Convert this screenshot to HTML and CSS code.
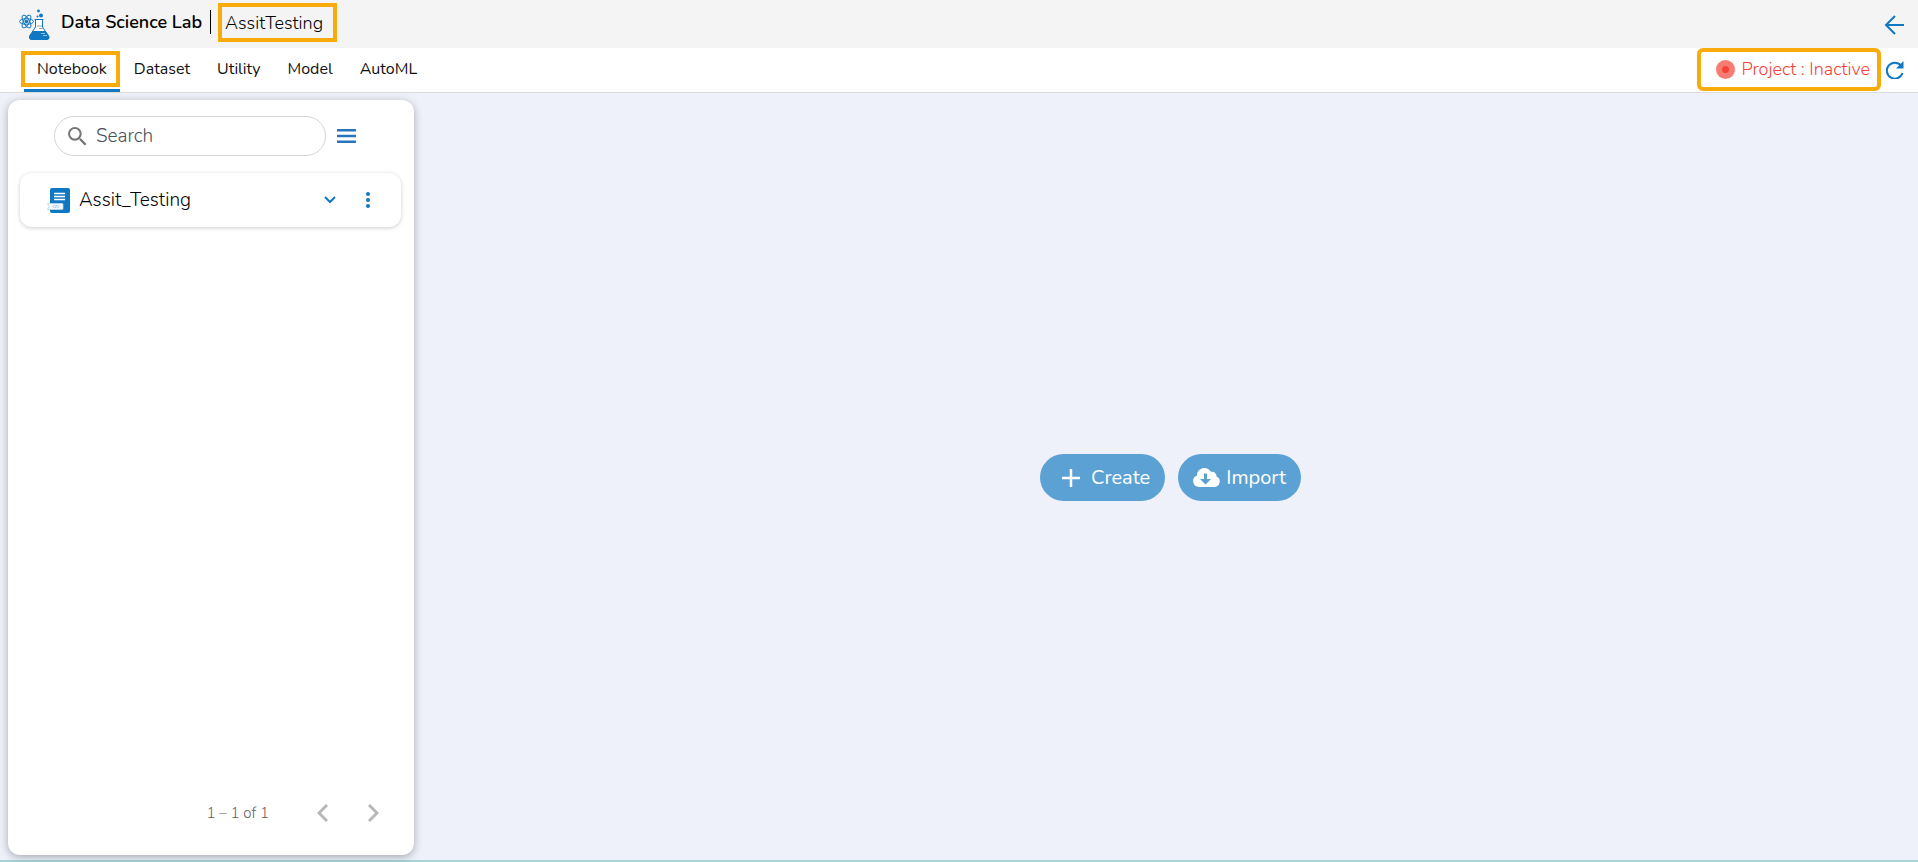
FILE: index.html
```html
<!DOCTYPE html>
<html lang="en">
<head>
    <meta charset="UTF-8">
    <meta name="viewport" content="width=device-width, initial-scale=1.0">
    <title>Data Science Lab</title>
    <link rel="stylesheet" href="styles.css">
</head>
<body>
    <header class="header">
        <svg class="logo" viewBox="0 0 32 32" width="32" height="32" aria-hidden="true">
            <g fill="none" stroke="#1078c2" stroke-width="1">
                <ellipse cx="7.500" cy="12.500" rx="7" ry="2.800"/>
                <ellipse cx="7.500" cy="12.500" rx="7" ry="2.800" transform="rotate(60 7.500 12.500)"/>
                <ellipse cx="7.500" cy="12.500" rx="7" ry="2.800" transform="rotate(120 7.500 12.500)"/>
            </g>
            <circle cx="7.500" cy="12.500" r="1.800" fill="#1078c2"/>
            <path d="M15.500 10.500h9M16.500 11v7L10.500 27q-1 3 2 3.500h15q3.500-.5 2-3.500L23.500 18v-7" fill="#fff" stroke="#1078c2" stroke-width="1"/>
            <path d="M14 22h12.500l3.500 5q1 3.500-2 4H12.500q-3-.5-2-4z" fill="#1078c2"/>
            <path d="M18 17h5M20 19.500h4.500" stroke="#9aa5b1" stroke-width="1"/>
            <path d="M22 24.500h4M24 26.500h4" stroke="#8fc3e6" stroke-width="1"/>
            <circle cx="19.500" cy="2" r="1.400" fill="#1078c2"/>
            <circle cx="22" cy="6.500" r="2" fill="#1078c2"/>
            <circle cx="18.500" cy="7.500" r="1" fill="#1078c2"/>
        </svg>
        <h1 class="title">Data Science Lab</h1>
        <span class="divider"></span>
        <span class="project-name">AssitTesting</span>
        <button class="icon-btn back-btn" aria-label="Back">
            <svg viewBox="0 0 20 20" width="20" height="20" fill="none" stroke="#1078c2" stroke-width="2"><path d="M20 10H2M11 1L2 10l9 9"/></svg>
        </button>
    </header>

    <nav class="tabs">
        <a href="#" class="tab active">Notebook</a>
        <a href="#" class="tab">Dataset</a>
        <a href="#" class="tab">Utility</a>
        <a href="#" class="tab">Model</a>
        <a href="#" class="tab">AutoML</a>
        <div class="status">
            <span class="status-dot"></span>
            <span>Project : Inactive</span>
        </div>
        <button class="icon-btn" aria-label="Refresh">
            <svg viewBox="0 0 18 18" width="18" height="18"><path d="M15 4.500A8 8 0 1 0 16.500 12" fill="none" stroke="#1078c2" stroke-width="2"/><path d="M17.500 0v7.500H10z" fill="#1078c2"/></svg>
        </button>
    </nav>

    <div class="content">
        <aside class="sidebar">
            <div class="search-row">
                <label class="search">
                    <svg viewBox="3 3 18 18" width="19" height="19" fill="#757575" aria-hidden="true"><path d="M15.500 14h-.79l-.28-.27A6.470 6.470 0 0 0 16 9.500 6.500 6.500 0 1 0 9.500 16c1.610 0 3.090-.59 4.230-1.570l.27.28v.79l5 4.990L20.490 19l-4.990-5zm-6 0C7.010 14 5 11.990 5 9.500S7.010 5 9.500 5 14 7.010 14 9.500 11.990 14 9.500 14z"/></svg>
                    <input type="text" placeholder="Search" aria-label="Search">
                </label>
                <button class="icon-btn" aria-label="Menu">
                    <svg viewBox="0 0 19 14" width="19" height="14" stroke="#2a74bd" stroke-width="2.400"><path d="M0 1.200h19M0 7h19M0 12.800h19"/></svg>
                </button>
            </div>

            <div class="item">
                <svg viewBox="0 0 24 26" width="24" height="26" aria-hidden="true">
                    <rect x="3" y="1" width="20" height="25" rx="2" fill="#1078c2"/>
                    <path d="M7 6.500h11M7 9.500h11M7 12.500h11" stroke="#fff" stroke-width="1.400"/>
                    <path d="M.5 16.500H15q1 0 1 1v4q0 1-1 1H.5l1.500-3z" fill="#f4f9fd" stroke="#b9d8ee" stroke-width=".8"/>
                    <path d="M7.500 18L6 19.500 7.500 21M10.500 18l1.500 1.500-1.500 1.500M9.500 18l-1 3" fill="none" stroke="#7db8e0" stroke-width=".8"/>
                </svg>
                <span class="item-name">Assit_Testing</span>
                <button class="icon-btn" aria-label="Expand">
                    <svg viewBox="0 0 12 8" width="12" height="8" fill="none" stroke="#1078c2" stroke-width="2"><path d="M1 1l5 5 5-5"/></svg>
                </button>
                <button class="icon-btn" aria-label="More options">
                    <svg viewBox="0 0 4 18" width="4" height="18" fill="#1078c2"><circle cx="2" cy="3" r="2"/><circle cx="2" cy="9" r="2"/><circle cx="2" cy="15" r="2"/></svg>
                </button>
            </div>

            <div class="pagination">
                <span>1 – 1 of 1</span>
                <button class="icon-btn" aria-label="Previous page" disabled>
                    <svg viewBox="0 0 11 18" width="11" height="18" fill="none" stroke="#b8b8b8" stroke-width="3"><path d="M10 1L2 9l8 8"/></svg>
                </button>
                <button class="icon-btn" aria-label="Next page" disabled>
                    <svg viewBox="0 0 11 18" width="11" height="18" fill="none" stroke="#b8b8b8" stroke-width="3"><path d="M1 1l8 8-8 8"/></svg>
                </button>
            </div>
        </aside>

        <main class="main">
            <button class="btn btn-create">
                <svg viewBox="0 0 18 18" width="18" height="18" stroke="#fff" stroke-width="2.500"><path d="M9 0v18M0 9h18"/></svg>
                Create
            </button>
            <button class="btn">
                <svg viewBox="0 0 27 19" width="27" height="19"><path d="M6 19a6 6 0 0 1-2-11.600A7.500 7.500 0 0 1 18 3.800 4.500 4.500 0 0 1 23.500 8.500 5.500 5.500 0 0 1 21.500 19z" fill="#fff"/><path d="M11 5.500h3v5.500h4L12.500 16.500 7 11h4z" fill="#5ba1d3"/></svg>
                Import
            </button>
        </main>
    </div>
</body>
</html>
```
FILE: styles.css
```css
* {
    margin: 0;
    padding: 0;
    box-sizing: border-box;
}

body {
    font-family: "Nunito", "Lato", sans-serif;
    font-size: 18px;
    color: #212121;
    background: #eef1fa;
    min-height: 100vh;
    display: flex;
    flex-direction: column;
}

svg {
    display: block;
    flex-shrink: 0;
}

.icon-btn {
    background: none;
    border: none;
    cursor: pointer;
}

/* Header */
.header {
    display: flex;
    align-items: center;
    height: 48px;
    padding: 0 14px 4px 19px;
    background: #f4f4f4;
}

.logo {
    margin-top: 6px;
}

.title {
    font-size: 18px;
    font-weight: 600;
    color: #000;
    margin-left: 10px;
}

.divider {
    width: 1px;
    height: 24px;
    background: #000;
    margin: 0 7px 0 8px;
}

.project-name {
    border: 4px solid #faab0c;
    height: 39px;
    line-height: 32px;
    padding: 0 10px 0 3px;
    font-weight: 300;
    color: #000;
}

.back-btn {
    margin-left: auto;
    padding-top: 6px;
}

/* Tabs */
.tabs {
    display: flex;
    align-items: center;
    gap: 1px;
    height: 45px;
    padding: 0 14px 0 24px;
    background: #fff;
    border-bottom: 1px solid #dcdcdf;
}

.tab {
    position: relative;
    height: 44px;
    line-height: 42px;
    padding: 0 13px;
    font-size: 16px;
    color: #111;
    text-decoration: none;
}

.tab.active {
    border-bottom: 3px solid #1078c2;
}

/* Highlight frame over the active tab */
.tab.active::after {
    content: "";
    position: absolute;
    box-sizing: border-box;
    top: 3px;
    left: -3px;
    right: 0;
    height: 36px;
    border: 4px solid #faab0c;
}

.status {
    display: flex;
    align-items: center;
    gap: 6px;
    height: 43px;
    margin: 0 4px 2px auto;
    padding: 0 7px 0 15px;
    border: 4px solid #faab0c;
    border-radius: 6px;
    color: #f44336;
    font-weight: 300;
}

.status-dot {
    width: 19px;
    height: 19px;
    border: 6px solid #f87c72;
    border-radius: 50%;
    background: #f44336;
}

/* Content */
.content {
    flex: 1;
    display: flex;
    padding: 7px 0 5px 8px;
    border-bottom: 2px solid #a9d3d8;
}

.sidebar {
    display: flex;
    flex-direction: column;
    width: 406px;
    padding: 16px 13px 16px 12px;
    background: #fff;
    border-radius: 12px;
    box-shadow: 0 2px 8px rgba(0, 0, 0, 0.3);
}

.search-row {
    display: flex;
    align-items: center;
    gap: 11px;
    padding-left: 34px;
}

.search {
    display: flex;
    align-items: center;
    gap: 9px;
    width: 272px;
    height: 40px;
    padding: 0 13px;
    border: 1px solid #d3d5d8;
    border-radius: 20px;
}

.search input {
    flex: 1;
    min-width: 0;
    border: none;
    outline: none;
    background: none;
    font: inherit;
    font-size: 19px;
    font-weight: 300;
}

.search input::placeholder {
    color: #495057;
}

.item {
    display: flex;
    align-items: center;
    height: 54px;
    margin-top: 17px;
    padding: 0 31px 0 27px;
    border-radius: 12px;
    box-shadow: 0 1px 4px rgba(0, 0, 0, 0.2);
}

.item-name {
    flex: 1;
    margin-left: 8px;
    font-size: 19px;
    font-weight: 300;
    color: #000;
}

.item .icon-btn + .icon-btn {
    margin-left: 30px;
}

.pagination {
    display: flex;
    align-items: center;
    justify-content: flex-end;
    margin-top: auto;
    padding: 0 22px 16px 0;
    font-size: 15px;
    font-weight: 300;
    color: #616161;
}

.pagination .icon-btn {
    margin-left: 40px;
}

.pagination span {
    margin-right: 8px;
}

/* Main area */
.main {
    flex: 1;
    display: flex;
    align-items: center;
    justify-content: center;
    gap: 13px;
    padding-left: 9px;
}

.btn {
    display: flex;
    align-items: center;
    gap: 6px;
    height: 47px;
    padding: 0 15px;
    border: none;
    border-radius: 24px;
    background: #5ba1d3;
    color: #fff;
    font: inherit;
    font-size: 20px;
    cursor: pointer;
}

.btn-create {
    gap: 11px;
    padding-left: 22px;
}
```
